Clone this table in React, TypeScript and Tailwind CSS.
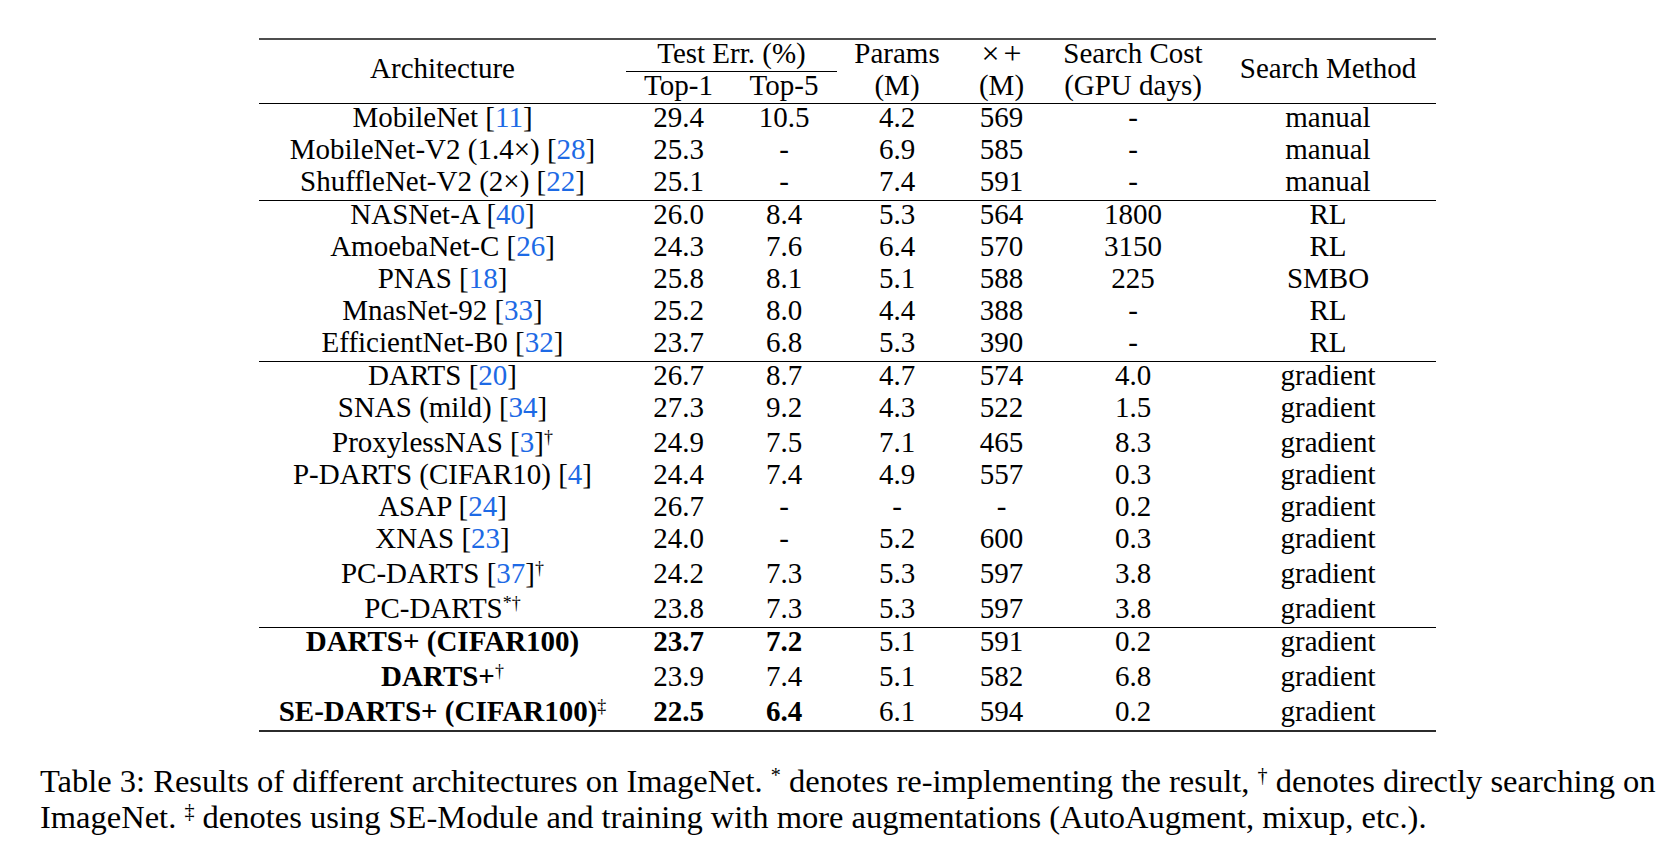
type Row = {
  name: string
  cite?: string
  sup?: string
  bold?: boolean
  top1: string
  top5: string
  params: string
  flops: string
  cost: string
  method: string
  boldErr?: boolean
}

const groups: Row[][] = [
  [
    { name: 'MobileNet', cite: '11', top1: '29.4', top5: '10.5', params: '4.2', flops: '569', cost: '-', method: 'manual' },
    { name: 'MobileNet-V2 (1.4×)', cite: '28', top1: '25.3', top5: '-', params: '6.9', flops: '585', cost: '-', method: 'manual' },
    { name: 'ShuffleNet-V2 (2×)', cite: '22', top1: '25.1', top5: '-', params: '7.4', flops: '591', cost: '-', method: 'manual' },
  ],
  [
    { name: 'NASNet-A', cite: '40', top1: '26.0', top5: '8.4', params: '5.3', flops: '564', cost: '1800', method: 'RL' },
    { name: 'AmoebaNet-C', cite: '26', top1: '24.3', top5: '7.6', params: '6.4', flops: '570', cost: '3150', method: 'RL' },
    { name: 'PNAS', cite: '18', top1: '25.8', top5: '8.1', params: '5.1', flops: '588', cost: '225', method: 'SMBO' },
    { name: 'MnasNet-92', cite: '33', top1: '25.2', top5: '8.0', params: '4.4', flops: '388', cost: '-', method: 'RL' },
    { name: 'EfficientNet-B0', cite: '32', top1: '23.7', top5: '6.8', params: '5.3', flops: '390', cost: '-', method: 'RL' },
  ],
  [
    { name: 'DARTS', cite: '20', top1: '26.7', top5: '8.7', params: '4.7', flops: '574', cost: '4.0', method: 'gradient' },
    { name: 'SNAS (mild)', cite: '34', top1: '27.3', top5: '9.2', params: '4.3', flops: '522', cost: '1.5', method: 'gradient' },
    { name: 'ProxylessNAS', cite: '3', sup: '†', top1: '24.9', top5: '7.5', params: '7.1', flops: '465', cost: '8.3', method: 'gradient' },
    { name: 'P-DARTS (CIFAR10)', cite: '4', top1: '24.4', top5: '7.4', params: '4.9', flops: '557', cost: '0.3', method: 'gradient' },
    { name: 'ASAP', cite: '24', top1: '26.7', top5: '-', params: '-', flops: '-', cost: '0.2', method: 'gradient' },
    { name: 'XNAS', cite: '23', top1: '24.0', top5: '-', params: '5.2', flops: '600', cost: '0.3', method: 'gradient' },
    { name: 'PC-DARTS', cite: '37', sup: '†', top1: '24.2', top5: '7.3', params: '5.3', flops: '597', cost: '3.8', method: 'gradient' },
    { name: 'PC-DARTS', sup: '*†', top1: '23.8', top5: '7.3', params: '5.3', flops: '597', cost: '3.8', method: 'gradient' },
  ],
  [
    { name: 'DARTS+ (CIFAR100)', bold: true, boldErr: true, top1: '23.7', top5: '7.2', params: '5.1', flops: '591', cost: '0.2', method: 'gradient' },
    { name: 'DARTS+', bold: true, sup: '†', top1: '23.9', top5: '7.4', params: '5.1', flops: '582', cost: '6.8', method: 'gradient' },
    { name: 'SE-DARTS+ (CIFAR100)', bold: true, boldErr: true, sup: '‡', top1: '22.5', top5: '6.4', params: '6.1', flops: '594', cost: '0.2', method: 'gradient' },
  ],
]

function TableRow({ row }: { row: Row }) {
  const err = row.boldErr ? 'font-bold' : ''
  return (
    <div className={`flex items-start leading-[27px] ${row.sup ? 'h-[35px] pt-[3px]' : 'h-[32px]'}`}>
      <div className={`w-[367px] text-center ${row.bold ? 'font-bold' : ''}`}>
        {row.name}
        {row.cite && (
          <>
            {' '}[<span className="text-[#1d6ae5]">{row.cite}</span>]
          </>
        )}
        {row.sup && <sup className="text-[0.62em] font-normal">{row.sup}</sup>}
      </div>
      <div className={`w-[105px] text-center ${err}`}>{row.top1}</div>
      <div className={`w-[106px] text-center ${err}`}>{row.top5}</div>
      <div className="w-[120px] text-center">{row.params}</div>
      <div className="w-[89px] text-center">{row.flops}</div>
      <div className="w-[174px] text-center">{row.cost}</div>
      <div className="w-[216px] text-center">{row.method}</div>
    </div>
  )
}

export default function App() {
  return (
    <div className="w-[1668px] h-[841px] bg-white text-black overflow-hidden font-['Liberation_Serif','Times_New_Roman',serif]">
      <div className="ml-[259px] w-[1177px] pt-[38px] text-[29px]">
        <div className="h-[2px] bg-[#4d4d4d]" />

        {/* header */}
        <div className="flex h-[63px] leading-[27px]">
          <div className="w-[367px] pt-[15px] text-center">Architecture</div>
          <div className="w-[211px] flex flex-col">
            <div className="h-[31px] text-center">Test Err. (%)</div>
            <div className="h-px bg-black" />
            <div className="flex h-[31px]">
              <div className="w-[105px] text-center">Top-1</div>
              <div className="w-[106px] text-center">Top-5</div>
            </div>
          </div>
          <div className="w-[120px] text-center">
            <div className="h-[32px]">Params</div>
            <div>(M)</div>
          </div>
          <div className="w-[89px] text-center">
            <div className="h-[32px]">
              <span className="inline-block w-[22px] text-[1.1em]">×</span>
              <span className="inline-block w-[22px] text-[1.1em]">+</span>
            </div>
            <div>(M)</div>
          </div>
          <div className="w-[174px] text-center">
            <div className="h-[32px]">Search Cost</div>
            <div>(GPU days)</div>
          </div>
          <div className="w-[216px] pt-[15px] text-center">Search Method</div>
        </div>

        {groups.map((group, gi) => (
          <div key={gi}>
            <div className="h-px bg-black" />
            {group.map((row, ri) => (
              <TableRow key={ri} row={row} />
            ))}
          </div>
        ))}
        <div className="h-[2px] bg-[#2b2b2b]" />
      </div>

      {/* caption */}
      <p className="mt-[31px] ml-[40px] text-[32.5px] leading-[36px] whitespace-nowrap">
        Table 3: Results of different architectures on ImageNet. <sup className="text-[0.62em]">*</sup> denotes
        re-implementing the result, <sup className="text-[0.62em]">†</sup> denotes directly searching on
        <br />
        ImageNet. <sup className="text-[0.62em]">‡</sup> denotes using SE-Module and training with more augmentations
        (AutoAugment, mixup, etc.).
      </p>
    </div>
  )
}
